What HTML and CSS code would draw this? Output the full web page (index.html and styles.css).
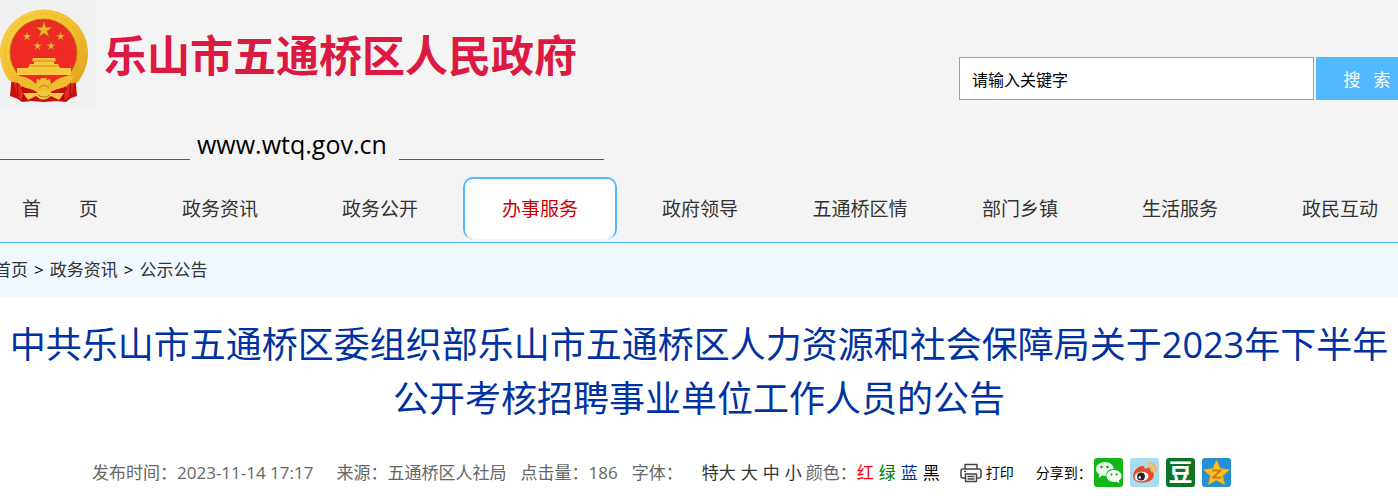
FILE: index.html
```html
<!DOCTYPE html>
<html lang="zh-CN">
<head>
	<meta charset="utf-8">
	<title>乐山市五通桥区人民政府</title>
	<link rel="stylesheet" href="styles.css">
</head>
<body>
	<header class="header">
		<div class="top">
			<div class="brand">
				<a class="logo" href="#">
					<svg class="emblem" viewBox="0 0 95 108" aria-hidden="true">
						<defs>
							<linearGradient id="gold" x1="0" y1="0" x2="1" y2="1">
								<stop offset="0" stop-color="#fbd24a"/>
								<stop offset="0.5" stop-color="#f3bf2e"/>
								<stop offset="1" stop-color="#dfa01c"/>
							</linearGradient>
							<path id="star" d="M0-10 2.3-3.1 9.5-3.1 3.7 1.2 5.9 8.1 0 3.8-5.9 8.1-3.7 1.2-9.5-3.1-2.3-3.1Z"/>
						</defs>
						<!-- ribbon -->
						<path fill="#c5100f" d="M12 74 10 96l8 3 4 3 10-1 12 1 12-1 10 1 5-4 6-2-2-22Z"/>
						<path fill="#e52a1f" d="M13 78l4 18 5 4 2-12ZM75 78l-4 17-6 5-3-12Z"/>
						<path stroke="#8e0b0b" fill="none" d="M17 80l1 17M23 86l1 14M71 80l-1 16M65 86l-2 14"/>
						<!-- wheat ring -->
						<path fill="url(#gold)" d="M44 9.500C68 9.500 88 29 88 53c0 12-5 23-11 30-7-1-13 3-20 6H31c-7-4-13-7-20-7C4 75 0 64 0 53 0 29 20 9.500 44 9.500Z"/>
						<circle cx="44" cy="53" r="39" fill="none" stroke="#e5ab24" stroke-width="1" stroke-dasharray="2 3"/>
						<circle cx="43.500" cy="52.500" r="33.500" fill="#ed2a24" stroke="#b77812"/>
						<!-- stars -->
						<g fill="#efb52c" stroke="#a85d12" stroke-width=".7">
							<use href="#star" transform="translate(44 30) scale(.88)"/>
							<use href="#star" transform="translate(27 36.500) scale(.46)"/>
							<use href="#star" transform="translate(60.500 36.500) scale(.46)"/>
							<use href="#star" transform="translate(37.500 46) scale(.46)"/>
							<use href="#star" transform="translate(51 46) scale(.46)"/>
						</g>
						<!-- gate -->
						<path fill="#f5c83f" d="M33 58h22l1 3h-2v3h4l2 4h11v7H17v-7h11l2-4h4v-3h-2Z"/>
						<path stroke="#d28a18" fill="none" d="M32 61h24M30 66h28"/>
						<!-- gear and knot -->
						<path fill="#f0bd30" d="M13 75q16 1 23 9l1-5 3 1 1-2h5l1 2 3-1 1 5q7-8 24-9l-8 11-17 6H37l-16-6Z"/>
						<path fill="#c5100f" d="M20 88q12 0 16 4l-4 3-8-2ZM68 88q-12 0-16 4l4 3 8-2Z"/>
						<path fill="#f5c83f" d="M36 93q8-6 16 0l12 0-5 7-8-4q-8 7-15 0l-8 4-5-7Z"/>
						<path stroke="#b87915" fill="none" d="M39 88q5-5 10 0M38 95q6 4 12 0"/>
					</svg>
					<span class="site-name">乐山市五通桥区人民政府</span>
				</a>
				<p class="domain">www.wtq.gov.cn</p>
			</div>
			<form class="search">
				<input type="text" name="keyword" class="search-text" value="请输入关键字" aria-label="请输入关键字">
				<button type="submit" class="search-btn">搜 &nbsp; 索</button>
			</form>
		</div>
		<nav class="nav">
			<a href="#">首　　页</a>
			<a href="#">政务资讯</a>
			<a href="#">政务公开</a>
			<a href="#" class="active">办事服务</a>
			<a href="#">政府领导</a>
			<a href="#">五通桥区情</a>
			<a href="#">部门乡镇</a>
			<a href="#">生活服务</a>
			<a href="#">政民互动</a>
		</nav>
	</header>

	<div class="crumbs">
		<a href="#">首页</a>
		<span>&gt;</span>
		<a href="#">政务资讯</a>
		<span>&gt;</span>
		<a href="#">公示公告</a>
	</div>

	<main class="article">
		<h1 class="title">中共乐山市五通桥区委组织部乐山市五通桥区人力资源和社会保障局关于2023年下半年公开考核招聘事业单位工作人员的公告</h1>
		<div class="meta">
			<span class="date">发布时间：2023-11-14 17:17</span>
			<span class="source">来源：五通桥区人社局</span>
			<span class="hits">点击量：186</span>
			<span class="font-label">字体：</span>
			<span class="sizes">
				<a href="#">特大</a>
				<a href="#">大</a>
				<a href="#">中</a>
				<a href="#">小</a>
			</span>
			<span>颜色：</span>
			<span class="colors">
				<a href="#" class="red">红</a>
				<a href="#" class="green">绿</a>
				<a href="#" class="blue">蓝</a>
				<a href="#" class="black">黑</a>
			</span>
			<a href="#" class="print">
				<svg viewBox="0 0 22 20" width="22" height="20" aria-hidden="true">
					<g fill="#fff" stroke="#444" stroke-width="1.500" stroke-linejoin="round">
						<path d="M5 6V1.500h12V6"/>
						<rect x="1" y="6" width="20" height="9" rx="2"/>
						<path d="M5.500 11h11v7.500h-11Z"/>
						<path d="M7.500 13.500h7M7.500 16h7M4 8.500h2"/>
					</g>
				</svg>
				打印
			</a>
			<span class="share">
				<span>分享到：</span>
				<a href="#" aria-label="微信">
					<svg viewBox="0 0 29 29" width="29" height="29">
						<rect width="29" height="29" rx="3" fill="#0fb817"/>
						<path fill="#e8f8e6" d="M11 4c5 0 8.700 3 8.700 7-5 0-8 3-7.500 7l-4-.5L4.500 20l1-3.500C3.300 15 2 13.500 2 11c0-4 4-7 9-7Z"/>
						<path fill="#f4fbf3" d="M20 12c4.200 0 7.500 2.600 7.500 6 0 2-1.200 3.600-2.700 4.700l.7 2.300-3-1.300c-5 1.200-10-1.500-10-5.700 0-3.400 3.300-6 7.500-6Z"/>
						<g fill="#0a9a12"><circle cx="7.500" cy="9" r="1.200"/><circle cx="13.500" cy="9" r="1.200"/><circle cx="17.500" cy="16.500" r="1"/><circle cx="22.500" cy="16.500" r="1"/></g>
					</svg>
				</a>
				<a href="#" aria-label="新浪微博">
					<svg viewBox="0 0 29 29" width="29" height="29">
						<rect width="29" height="29" rx="3" fill="#a9dcf0"/>
						<path fill="#ec4a23" d="M3 18c0-5 6-11 10-10 2 .5 1.500 2.500 1.500 3 3-1.500 7-1.500 6 2 3 .8 4 3 3 6-1.500 4-7 6-12 5.500C6.500 24.500 3 22 3 18Z"/>
						<ellipse cx="11.500" cy="18.500" rx="7" ry="4.800" fill="#fff" transform="rotate(-8 11.500 18.500)"/>
						<circle cx="11" cy="18.500" r="3.900" fill="#222"/>
						<circle cx="9.800" cy="19.500" r="1.200" fill="#fff"/>
						<path fill="none" stroke="#f6b443" stroke-width="2" stroke-linecap="round" d="M18 5.500c5-1 9 3 7.500 8M18.500 9c2.500-.5 4.500 1.500 3.500 4"/>
					</svg>
				</a>
				<a href="#" aria-label="豆瓣">
					<svg viewBox="0 0 29 29" width="29" height="29">
						<rect width="29" height="29" rx="3" fill="#0c7427"/>
						<text class="dou" x="14.500" y="23" text-anchor="middle">豆</text>
					</svg>
				</a>
				<a href="#" aria-label="QQ空间">
					<svg viewBox="0 0 29 29" width="29" height="29">
						<rect width="29" height="29" rx="3" fill="#2590d6"/>
						<path fill="#fcc726" stroke="#f2a516" stroke-linejoin="round" d="M14.500 2.500l3.700 8.200 9 1-6.700 6 1.900 8.800-7.900-4.400-7.900 4.400 1.900-8.800-6.700-6 9-1Z"/>
						<path fill="none" stroke="#d8730f" stroke-width="2" stroke-linejoin="round" d="M10 12.500h8.500l-7.500 7h8.500"/>
					</svg>
				</a>
			</span>
		</div>
	</main>
</body>
</html>
```
FILE: styles.css
```css
*{
	box-sizing: border-box;
}
body{
	margin: 0;
	font-family: "Open Sans", "Noto Sans CJK SC", sans-serif;
	font-size: 17px;
	color: #000;
	background: #fff;
	overflow-x: hidden;
}
a{
	color: #333;
	text-decoration: none;
}

/* header */
.header{
	background: #f4f4f4;
	border-bottom: 1px solid #52b6f6;
	overflow: hidden;
}
.top{
	display: flex;
	justify-content: space-between;
	align-items: flex-start;
	height: 177px;
}
.logo{
	display: flex;
	align-items: flex-start;
	height: 108px;
}
.emblem{
	width: 95px;
	height: 108px;
	background: #f1f1f1;
}
.site-name{
	margin-left: 9px;
	font-size: 43px;
	font-weight: bold;
	line-height: 112px;
	color: #dc1a41;
}
.domain{
	display: flex;
	align-items: flex-end;
	margin: 0;
	padding-top: 20px;
	font-size: 25px;
	line-height: 32px;
}
.domain::before,
.domain::after{
	content: "";
	width: 190px;
	height: 1px;
	background: #dc1a41;
	margin-right: 7px;
}
.domain::after{
	width: 205px;
	margin: 0 0 0 12px;
}
.search{
	display: flex;
	gap: 2px;
	margin: 57px -20px 0 0;
}
.search-text{
	width: 355px;
	height: 43px;
	padding: 0 12px;
	border: 1px solid #52b6f6;
	font-family: inherit;
	font-size: 16px;
	color: #000;
	background: #fff;
}
.search-btn{
	width: 102px;
	height: 43px;
	padding: 0;
	border: 0;
	font-family: inherit;
	font-size: 17px;
	color: #fff;
	background: #52b8ff;
}

/* nav */
.nav{
	display: grid;
	grid-template-columns: repeat(9, 1fr);
	margin: 0 -22px 0 -20px;
	padding-bottom: 3px;
}
.nav a{
	margin: 0 3px;
	height: 62px;
	border: 2px solid transparent;
	border-bottom: 0;
	border-radius: 10px;
	font-size: 19px;
	line-height: 60px;
	text-align: center;
	white-space: nowrap;
}
.nav .active{
	border-color: #52b8ff;
	color: #c00;
	background: #fff;
}

.crumbs{
	display: flex;
	gap: 6px;
	margin-left: -6px;
	height: 54px;
	line-height: 54px;
	background: #f0f8ff;
}

/* article */
.article{
	padding-top: 21px;
}
.title{
	margin: 0;
	padding: 0 8px;
	font-size: 36px;
	font-weight: normal;
	line-height: 54px;
	text-align: center;
	color: #0033a1;
}
.meta{
	display: flex;
	align-items: center;
	margin-top: 32px;
	padding-left: 92px;
	height: 29px;
	line-height: 28px;
	white-space: nowrap;
	color: #666;
}
.date{
	margin-right: 23px;
}
.source,
.hits{
	margin-right: 14px;
}
.font-label{
	margin-right: 19px;
}
.sizes,
.colors{
	display: flex;
	gap: 5px;
	margin-right: 4px;
}
.colors{
	margin: 0 20px 0 0;
}
.colors .red{
	color: #f00;
}
.colors .green{
	color: #008000;
}
.colors .blue{
	color: #0033a1;
}
.colors .black{
	color: #000;
}
.print{
	display: flex;
	align-items: center;
	gap: 4px;
	margin-right: 22px;
	font-size: 14px;
	color: #000;
}
.share{
	display: flex;
	align-items: center;
	gap: 7px;
	font-size: 14px;
	color: #000;
}
.share span{
	margin-right: -5px;
}
.share svg{
	display: block;
}
.dou{
	font-family: "Noto Sans CJK SC", sans-serif;
	font-size: 24px;
	font-weight: bold;
	fill: #fff;
}
```
